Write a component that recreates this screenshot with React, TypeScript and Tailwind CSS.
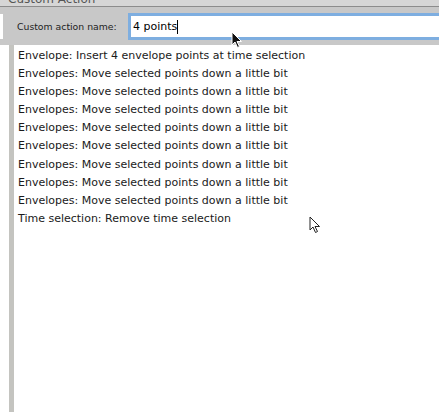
import React from 'react';

const rows = [
  'Envelope: Insert 4 envelope points at time selection',
  'Envelopes: Move selected points down a little bit',
  'Envelopes: Move selected points down a little bit',
  'Envelopes: Move selected points down a little bit',
  'Envelopes: Move selected points down a little bit',
  'Envelopes: Move selected points down a little bit',
  'Envelopes: Move selected points down a little bit',
  'Envelopes: Move selected points down a little bit',
  'Envelopes: Move selected points down a little bit',
  'Time selection: Remove time selection',
];

function Arrow({ fill, stroke }: { fill: string; stroke: string }) {
  return (
    <svg width="12" height="18" viewBox="0 0 12 18">
      <path
        d="M1 1 L1 14 L4 11 L6.5 16.5 L8.5 15.5 L6 10.5 L10.5 10.5 Z"
        fill={fill}
        stroke={stroke}
        strokeWidth="1"
        strokeLinejoin="round"
      />
    </svg>
  );
}

export default function App() {
  return (
    <div
      className="relative w-[439px] h-[412px] overflow-hidden bg-[#c8c8c8] flex flex-col"
      style={{ fontFamily: '"DejaVu Sans", Verdana, sans-serif' }}
    >
      {/* Title bar, cut off at top */}
      <div className="h-[7px] bg-[#d6d6d6] border-b border-[#8c8c8c] relative overflow-hidden">
        <span className="absolute left-[8px] -top-[8px] text-[12px] leading-[14px] text-[#555]">Custom Action</span>
      </div>

      {/* Name row */}
      <div className="flex items-center h-[38px] pt-[1px]">
        <div className="w-[3px] h-[25px] bg-white mr-[14px]" />
        <span className="text-[9.3px] text-[#222] w-[111px]">Custom action name:</span>
        <div className="flex-1 h-[27px] border-[3px] border-r-0 border-[#7eaee0] bg-white flex items-center pl-[2px]">
          <span className="text-[11px] text-black leading-none">4 points</span>
          <span className="w-px h-[14px] bg-black" />
        </div>
      </div>

      {/* List area */}
      <div className="flex-1 flex">
        <div className="w-[9px] bg-white" />
        <div className="w-[5px] bg-[#c4c4c0]" />
        <div className="flex-1 bg-white pt-[2px] pl-[4px]">
          {rows.map((r, i) => (
            <div key={i} className="h-[18.1px] leading-[18px] text-[11px] text-[#1a1a1a] whitespace-nowrap">
              {r}
            </div>
          ))}
        </div>
      </div>

      <div className="absolute left-[231px] top-[31px]">
        <Arrow fill="#111" stroke="#fff" />
      </div>
      <div className="absolute left-[309px] top-[216px]">
        <Arrow fill="#fff" stroke="#222" />
      </div>
    </div>
  );
}
